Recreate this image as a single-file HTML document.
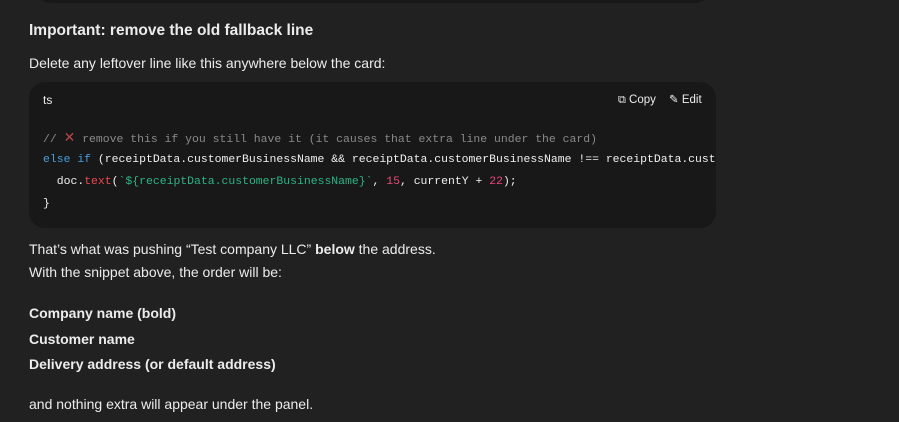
<!DOCTYPE html>
<html><head><meta charset="utf-8"><style>
body{margin:0;width:899px;height:422px;background:#212121;overflow:hidden;position:relative;font-family:"Liberation Sans",sans-serif;color:#ececec}
.a{position:absolute;white-space:nowrap;font-size:14px;line-height:18px}
.top{position:absolute;left:35px;top:-20px;width:676px;height:23px;background:#181818;border-radius:0 0 16px 16px}
.code{position:absolute;left:29px;top:82px;width:687px;height:146px;background:#181818;border-radius:16px;overflow:hidden}
.m{position:absolute;left:14px;font-family:"Liberation Mono",monospace;font-size:11.45px;white-space:pre;color:#f0f0f0;line-height:16px}
.c{color:#8a8a8a}.k{color:#4a9eda}.r{color:#f0484f}.g{color:#2bb585}.n{color:#f0467a}
</style></head><body>
<div class="top"></div>
<div class="a" style="left:29px;top:21px;font-size:15.5px;font-weight:bold;line-height:20px">Important: remove the old fallback line</div>
<div class="a" style="left:29px;top:54px">Delete any leftover line like this anywhere below the card:</div>
<div class="code">
<div class="a" style="left:14px;top:9px;font-size:12px">ts</div>
<div class="a" style="left:589px;top:9px;font-size:11.5px"><span style="font-size:11px">⧉</span> Copy</div>
<div class="a" style="left:640px;top:9px;font-size:11.5px">✎ Edit</div>
<div class="m c" style="top:49px">// <span style="color:#b8454c;font-family:'DejaVu Sans';font-weight:bold;font-size:14px;line-height:14px">✕</span> remove this if you still have it (it causes that extra line under the card)</div>
<div class="m" style="top:70px"><span class="k">else if</span> (receiptData.customerBusinessName &amp;&amp; receiptData.customerBusinessName !== receiptData.customerBusinessName) {</div>
<div class="m" style="top:92px">  doc.<span class="r">text</span>(<span class="g">`${receiptData.customerBusinessName}`</span>, <span class="n">15</span>, currentY + <span class="n">22</span>);</div>
<div class="m" style="top:114px">}</div>
</div>
<div class="a" style="left:29px;top:240px">That’s what was pushing “Test company LLC” <b>below</b> the address.</div>
<div class="a" style="left:29px;top:263px">With the snippet above, the order will be:</div>
<div class="a" style="left:29px;top:304px;font-weight:bold">Company name (bold)</div>
<div class="a" style="left:29px;top:330px;font-weight:bold">Customer name</div>
<div class="a" style="left:29px;top:355px;font-weight:bold">Delivery address (or default address)</div>
<div class="a" style="left:29px;top:395px">and nothing extra will appear under the panel.</div>
</body></html>
